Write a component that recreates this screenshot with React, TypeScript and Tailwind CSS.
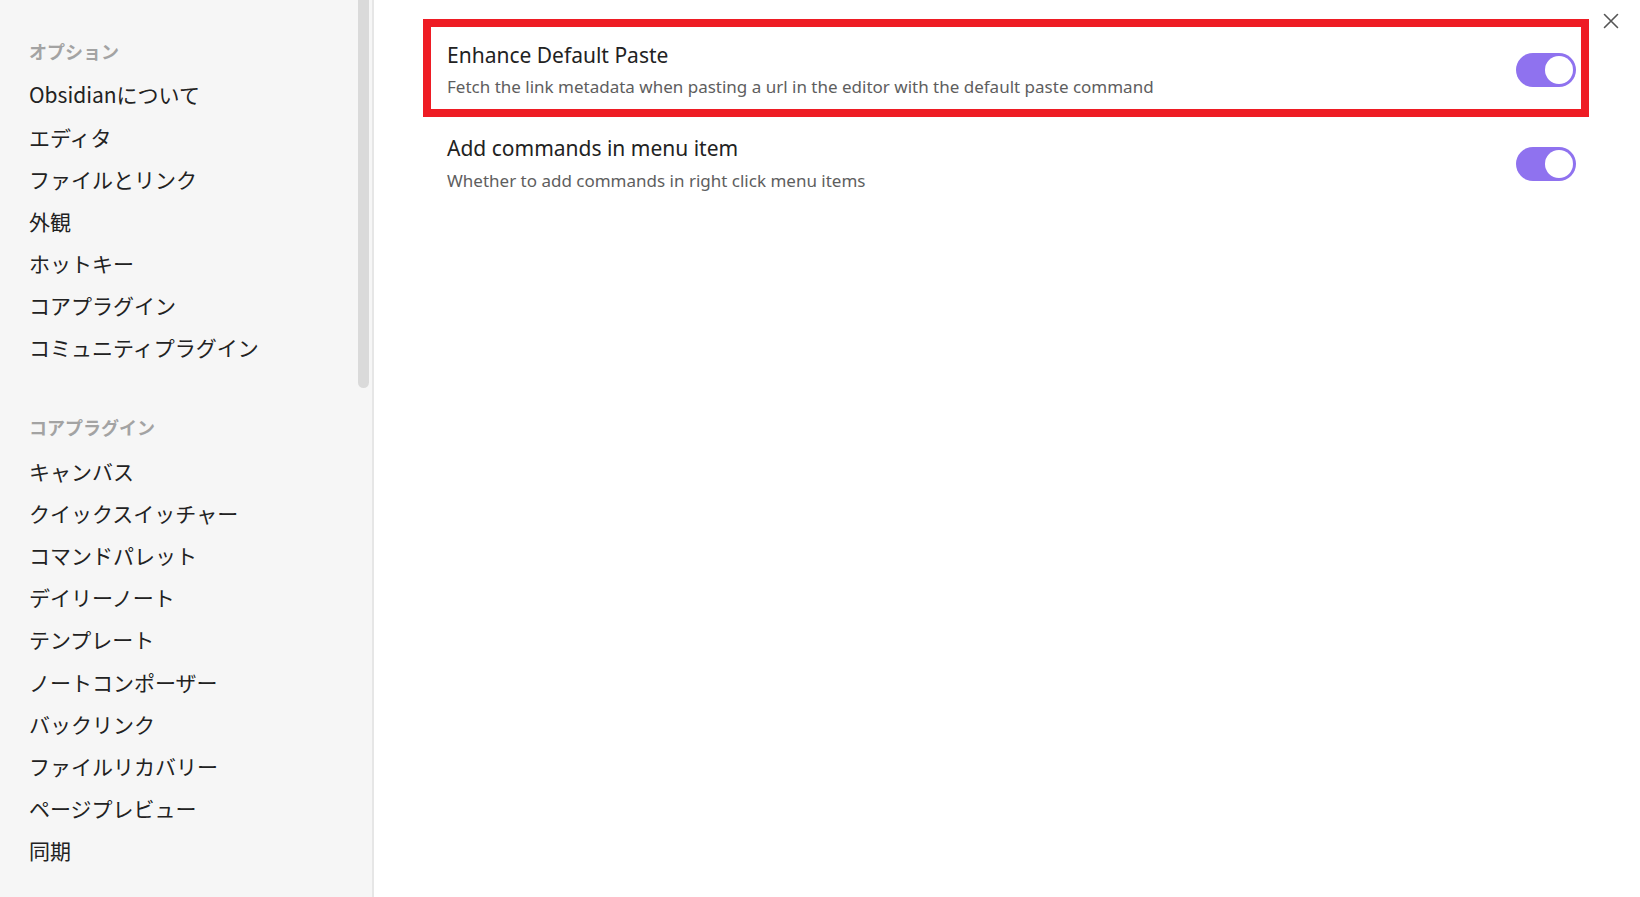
import React from "react";

const font = { fontFamily: '"Noto Sans", "Noto Sans CJK JP", sans-serif' };
const jp = { fontFamily: '"Noto Sans CJK JP", sans-serif' };

const options = ["Obsidianについて", "エディタ", "ファイルとリンク", "外観", "ホットキー", "コアプラグイン", "コミュニティプラグイン"];
const core = ["キャンバス", "クイックスイッチャー", "コマンドパレット", "デイリーノート", "テンプレート", "ノートコンポーザー", "バックリンク", "ファイルリカバリー", "ページプレビュー", "同期"];

function Toggle() {
  return (
    <div className="flex h-[34px] w-[60px] shrink-0 items-center justify-end rounded-full bg-[#8f72ef] pr-[3px]">
      <div className="h-[28px] w-[28px] rounded-full bg-white" />
    </div>
  );
}

export default function App() {
  return (
    <div className="relative flex h-[897px] w-[1640px] overflow-hidden bg-white" style={font}>
      <aside className="relative w-[374px] shrink-0 border-r-[2px] border-[#e6e6e6] bg-[#f6f6f6] pl-[29px] pt-[39px]">
        <div className="absolute left-[358px] top-0 h-[388px] w-[11px] rounded-b-full bg-[#dadada]" />
        <div className="mb-[11px] text-[18px] font-bold leading-[24px] text-[#a3a3a3]" style={jp}>オプション</div>
        {options.map((o) => (
          <div key={o} className="flex h-[42.2px] items-center text-[21px] text-[#222222]" style={jp}>{o}</div>
        ))}
        <div className="mb-[11px] mt-[46px] text-[18px] font-bold leading-[24px] text-[#a3a3a3]" style={jp}>コアプラグイン</div>
        {core.map((o) => (
          <div key={o} className="flex h-[42.2px] items-center text-[21px] text-[#222222]" style={jp}>{o}</div>
        ))}
      </aside>
      <main className="flex-1 pl-[49px] pr-[51px] pt-[19px]">
        <div className="flex items-center justify-between border-[8px] border-[#ee1c24] pb-[10px] pl-[16px] pr-[5px] pt-[14px]">
          <div>
            <div className="text-[21px] leading-[28px] text-[#222222]">Enhance Default Paste</div>
            <div className="mt-[6px] text-[17px] leading-[24px] text-[#5e5e5e]">Fetch the link metadata when pasting a url in the editor with the default paste command</div>
          </div>
          <Toggle />
        </div>
        <div className="flex items-center justify-between border-[8px] border-transparent pl-[16px] pr-[5px] pt-[9px]">
          <div>
            <div className="text-[21px] leading-[28px] text-[#222222]">Add commands in menu item</div>
            <div className="mt-[7px] text-[17px] leading-[24px] text-[#5e5e5e]">Whether to add commands in right click menu items</div>
          </div>
          <Toggle />
        </div>
      </main>
      <svg className="absolute right-[21px] top-[13px]" width="16" height="16" viewBox="0 0 16 16" fill="none" stroke="#555555" strokeWidth="1.6" strokeLinecap="round">
        <path d="M1.5 1.5 L14.5 14.5 M14.5 1.5 L1.5 14.5" />
      </svg>
    </div>
  );
}
